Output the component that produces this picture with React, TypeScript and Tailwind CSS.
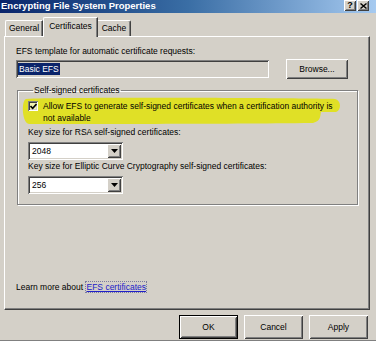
import React from "react";

const raised =
  "shadow-[inset_1px_1px_0_#ffffff,inset_-1px_-1px_0_#404040,inset_2px_2px_0_#d4d0c8,inset_-2px_-2px_0_#808080]";
const sunken =
  "shadow-[inset_1px_1px_0_#808080,inset_-1px_-1px_0_#ffffff,inset_2px_2px_0_#404040,inset_-2px_-2px_0_#d4d0c8]";

function Combo({ value }: { value: string }) {
  return (
    <div className={`w-[95px] h-[18px] bg-white flex items-center p-[2px] ${sunken}`}>
      <span className="flex-1 pl-[2px] leading-[11px]">{value}</span>
      <div className={`w-[14px] h-[14px] bg-[#d4d0c8] flex items-center justify-center ${raised}`}>
        <svg width="7" height="4" viewBox="0 0 7 4">
          <path d="M0 0H7L3.5 4Z" fill="#000" />
        </svg>
      </div>
    </div>
  );
}

function Btn({ label, def }: { label: string; def?: boolean }) {
  return (
    <div
      className={`w-[59px] h-[24px] flex items-center justify-center bg-[#d4d0c8] ${
        def ? "border border-black" : ""
      }`}
    >
      <div className={`w-full h-full flex items-center justify-center ${raised}`}>{label}</div>
    </div>
  );
}

export default function App() {
  return (
    <div className="w-[376px] h-[341px] bg-[#d4d0c8] overflow-hidden flex flex-col text-black text-[8.5px] leading-[11px] font-['Liberation_Sans',Arial,sans-serif] border-b border-[#808080]">
      {/* Title bar */}
      <div className="h-[13px] shrink-0 flex items-start bg-linear-to-r from-[#0a246a] via-[#3a6ea5] to-[#a6caf0]">
        <div className="flex-1 text-white font-bold text-[9.5px] leading-[12px] pl-[1px]">
          Encrypting File System Properties
        </div>
        <div className="flex gap-[1px] mr-[7px]">
          <div className={`w-[12px] h-[11px] bg-[#d4d0c8] flex items-center justify-center font-bold text-[9px] leading-[9px] ${raised}`}>
            ?
          </div>
          <div className={`w-[12px] h-[11px] bg-[#d4d0c8] flex items-center justify-center ${raised}`}>
            <svg width="7" height="6" viewBox="0 0 7 6">
              <path d="M0.5 0.5L6.5 5.5M6.5 0.5L0.5 5.5" stroke="#000" strokeWidth="1.4" />
            </svg>
          </div>
        </div>
      </div>

      {/* Tabs */}
      <div className="h-[23px] shrink-0 flex items-end pl-[5px]">
        <div className="w-[38px] h-[16px] border-t border-l border-white rounded-tl-[2px] shadow-[inset_-1px_0_0_#808080] border-r border-r-[#404040] flex items-center justify-center">
          General
        </div>
        <div className="relative z-10 -mb-[1px] w-[55px] h-[20px] bg-[#d4d0c8] border-t border-l border-white rounded-tl-[2px] border-r border-r-[#404040] shadow-[inset_-1px_0_0_#808080] flex items-start justify-center pt-[3px]">
          Certificates
        </div>
        <div className="w-[33px] h-[16px] border-t border-white rounded-tr-[2px] border-r border-r-[#404040] shadow-[inset_-1px_0_0_#808080] flex items-center justify-center">
          Cache
        </div>
      </div>

      {/* Panel */}
      <div className="ml-[4px] w-[366px] h-[274px] shrink-0 border-t border-l border-white border-r border-b border-r-[#404040] border-b-[#404040] shadow-[inset_-1px_-1px_0_#808080] flex flex-col pl-[11px] pr-[12px] pt-[9px]">
        <div>EFS template for automatic certificate requests:</div>
        <div className="flex items-center mt-[2px]">
          <div className={`w-[253px] h-[18px] flex items-center px-[2px] ${sunken}`}>
            <span className="bg-[#0a246a] text-white px-[1px] leading-[12px]">Basic EFS</span>
          </div>
          <div className="ml-[17px]">
            <div className={`w-[62px] h-[20px] flex items-center justify-center ${raised}`}>Browse...</div>
          </div>
        </div>

        {/* Group box */}
        <fieldset className="mt-[6px] ml-[1px] w-[341px] h-[120px] border border-[#808080] shadow-[inset_1px_1px_0_#ffffff,1px_1px_0_#ffffff] pl-[10px] pr-[8px]">
          <legend className="ml-[5px] px-[1px] leading-[11px]">Self-signed certificates</legend>
          <div className="relative flex mt-[4px]">
            <svg
              className="absolute left-[-7px] top-[-3px] pointer-events-none"
              width="322"
              height="29"
              viewBox="0 0 322 29"
            >
              <path
                d="M5 2C40 0 280 1 314 2C320 3 321 13 315 15L300 15C299 19 300 24 292 26C200 27 60 27 8 27C1 26 0 4 5 2Z"
                fill="#e0e026"
              />
            </svg>
            <div className={`relative w-[10px] h-[10px] shrink-0 bg-[#f2f2b0] mt-[1px] flex items-center justify-center ${sunken}`}>
              <svg width="7" height="7" viewBox="0 0 7 7">
                <path d="M0.5 3L2.7 5.3L6.5 1" stroke="#000" strokeWidth="1.6" fill="none" />
              </svg>
            </div>
            <div className="relative ml-[5px] leading-[12px]">
              Allow EFS to generate self-signed certificates when a certification authority is
              <br />
              not available
            </div>
          </div>
          <div className="mt-[3px]">Key size for RSA self-signed certificates:</div>
          <div className="mt-[4px]">
            <Combo value="2048" />
          </div>
          <div className="mt-[1px]">Key size for Elliptic Curve Cryptography self-signed certificates:</div>
          <div className="mt-[4px]">
            <Combo value="256" />
          </div>
        </fieldset>

        <div className="flex-1" />
        <div className="mb-[16px]">
          Learn more about{" "}
          <span className="ml-[1px] text-[#2020c8] underline outline outline-1 outline-dotted outline-[#7a7aa0]">
            EFS certificates
          </span>
        </div>
      </div>

      {/* Buttons */}
      <div className="flex justify-end gap-[6px] pr-[8px] mt-[5px]">
        <Btn label="OK" def />
        <Btn label="Cancel" />
        <Btn label="Apply" />
      </div>
    </div>
  );
}
